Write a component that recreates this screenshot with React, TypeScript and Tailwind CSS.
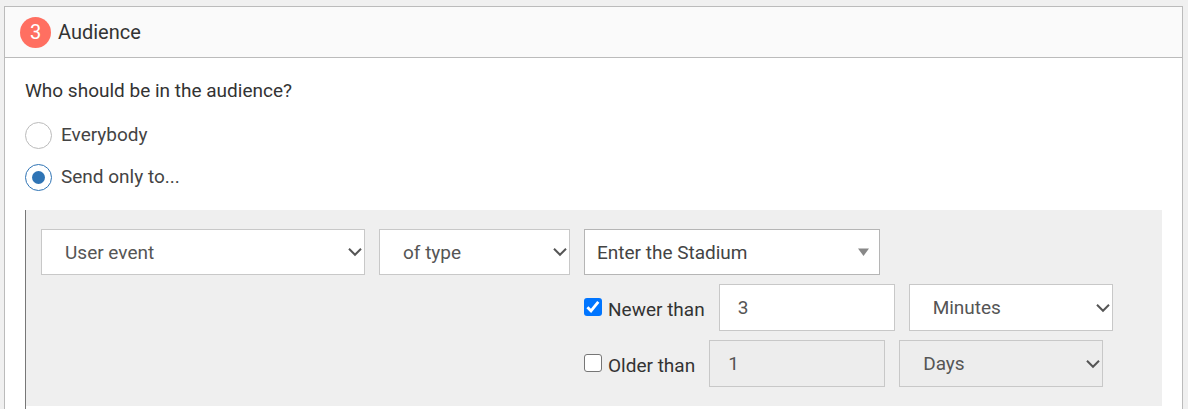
import { useState, type ReactNode } from "react";
import { clsx } from "clsx";

type SelectProps = {
  label: string;
  options: string[];
  className: string;
  disabled?: boolean;
};

function Select({ label, options, className, disabled = false }: SelectProps) {
  return (
    <span className={clsx("grid shrink-0 items-center", className)}>
      <select
        aria-label={label}
        disabled={disabled}
        className="col-start-1 row-start-1 h-full w-full appearance-none rounded-none border border-[#c8c8c8] bg-white pt-0.5 pr-8 pl-[23px] text-[19px] text-[#555] opacity-100 disabled:bg-[#ededed]"
      >
        {options.map((option) => (
          <option key={option}>{option}</option>
        ))}
      </select>
      <svg
        aria-hidden="true"
        viewBox="0 0 14 10"
        className="pointer-events-none col-start-1 row-start-1 mr-[3px] h-2.5 w-3.5 justify-self-end"
        fill="none"
        stroke="#555"
        strokeWidth="2"
      >
        <path d="M1 1.8 7 7.8 13 1.8" />
      </svg>
    </span>
  );
}

type AgeRowProps = {
  id: string;
  label: string;
  initialChecked: boolean;
  amount: string;
  units: string[];
};

function AgeRow({ id, label, initialChecked, amount, units }: AgeRowProps) {
  const [checked, setChecked] = useState(initialChecked);
  return (
    <div className="flex items-center">
      <label htmlFor={id} className="mr-3.5 flex items-start gap-1.5 pt-[5px] whitespace-nowrap">
        <input
          id={id}
          type="checkbox"
          checked={checked}
          onChange={(event) => setChecked(event.target.checked)}
          className="peer sr-only"
        />
        <span
          aria-hidden="true"
          className={clsx(
            "grid size-[18px] shrink-0 place-items-center rounded-[3px] peer-focus-visible:outline-2",
            checked ? "bg-[#0075ff]" : "border border-[#767676] bg-white",
          )}
        >
          {checked && (
            <svg viewBox="0 0 18 18" className="size-[18px]" fill="none" stroke="#fff" strokeWidth="2.8">
              <path d="M3.4 9.2 7 12.8 14.3 3.8" />
            </svg>
          )}
        </span>
        <span className="leading-6">{label}</span>
      </label>
      <input
        type="text"
        aria-label={`${label} amount`}
        defaultValue={amount}
        disabled={!checked}
        className="mr-3.5 h-[47px] w-44 min-w-0 border border-[#c8c8c8] bg-white px-[18px] text-[19px] text-[#555] disabled:bg-[#ededed]"
      />
      <Select
        label={`${label} unit`}
        options={units}
        disabled={!checked}
        className="h-[47px] w-[204px]"
      />
    </div>
  );
}

type RadioProps = {
  value: string;
  selected: string;
  onSelect: (value: string) => void;
  children: ReactNode;
};

function Radio({ value, selected, onSelect, children }: RadioProps) {
  return (
    <label className="flex items-center gap-[9px] text-[#444]">
      <input
        type="radio"
        name="audience"
        value={value}
        checked={selected === value}
        onChange={() => onSelect(value)}
        className="grid size-[27px] appearance-none place-items-center rounded-full border border-[#bbb] bg-white before:size-[13px] before:rounded-full checked:border-[#2f74b5] checked:before:bg-[#2f74b5]"
      />
      <span className="pb-0.5 leading-6">{children}</span>
    </label>
  );
}

export default function App() {
  const [audience, setAudience] = useState("filtered");

  return (
    <main className="flex min-h-screen flex-col bg-[#f0f0f0] pt-1.5 pr-[5px] pl-1 font-['Roboto',sans-serif] text-[19px] text-[#333]">
      <section className="flex-1 border border-b-0 border-[#bbb] bg-white">
        <header className="flex h-[51px] items-center gap-[7px] border-b border-[#bbb] bg-[#fafafa] pl-[15px]">
          <span className="grid size-[31px] place-items-center rounded-full bg-[#ff6f61] text-xl text-white">
            3
          </span>
          <h2 className="text-xl">Audience</h2>
        </header>

        <div className="px-5 pt-[21px]">
          <p className="leading-6">Who should be in the audience?</p>
          <div role="radiogroup" aria-label="Audience" className="my-[19px] flex flex-col gap-[15px]">
            <Radio value="everybody" selected={audience} onSelect={setAudience}>
              Everybody
            </Radio>
            <Radio value="filtered" selected={audience} onSelect={setAudience}>
              Send only to...
            </Radio>
          </div>

          <div className="border-l border-[#777] pb-5">
            <div className="flex items-start gap-3.5 bg-[#efefef] py-[19px] pl-[15px]">
              <Select label="Condition" options={["User event"]} className="h-[46px] w-[324px]" />
              <Select label="Match" options={["of type"]} className="h-[46px] w-[191px]" />
              <div className="flex flex-col gap-[9px]">
                <button
                  type="button"
                  aria-haspopup="listbox"
                  className="flex h-[46px] w-[296px] items-center justify-between border border-[#b5b5b5] bg-white pr-2.5 pl-3 text-[#444]"
                >
                  <span className="pt-0.5">Enter the Stadium</span>
                  <svg aria-hidden="true" viewBox="0 0 11 8" className="h-2 w-[11px]" fill="#888">
                    <path d="M0 0.5H11L5.5 8Z" />
                  </svg>
                </button>
                <AgeRow
                  id="newer-than"
                  label="Newer than"
                  initialChecked
                  amount="3"
                  units={["Minutes", "Hours", "Days"]}
                />
                <AgeRow
                  id="older-than"
                  label="Older than"
                  initialChecked={false}
                  amount="1"
                  units={["Days", "Hours", "Minutes"]}
                />
              </div>
            </div>
          </div>
        </div>
      </section>
    </main>
  );
}
